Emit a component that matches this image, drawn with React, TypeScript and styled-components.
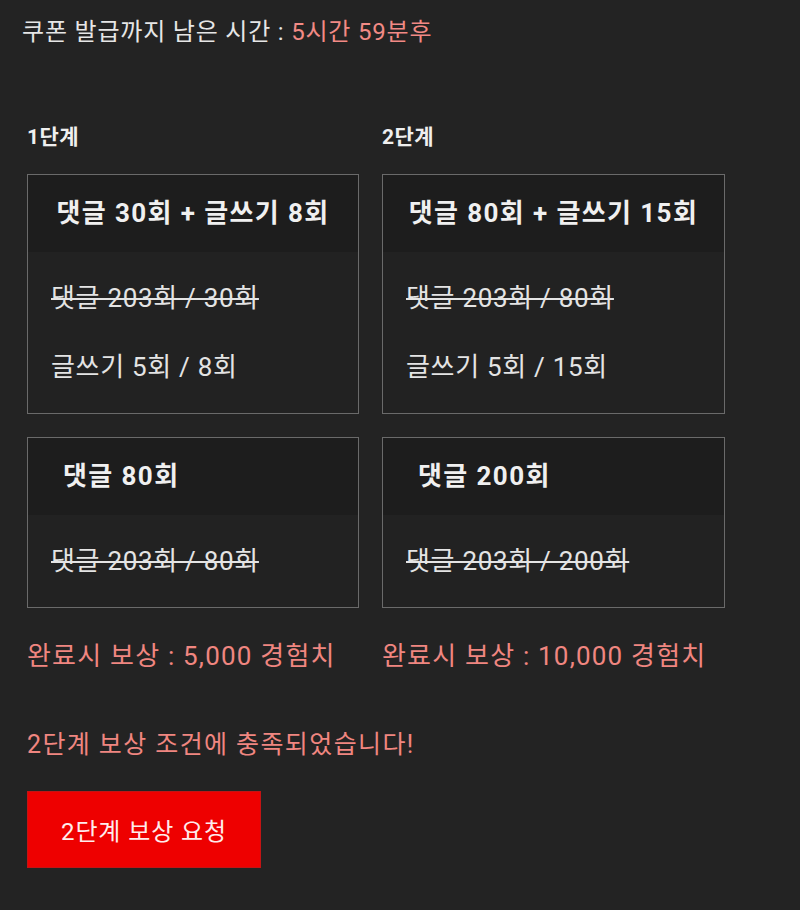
import React from 'react';
import styled, { createGlobalStyle } from 'styled-components';

const FONT = `Roboto, "Noto Sans CJK KR", "Noto Sans", sans-serif`;

const GlobalStyle = createGlobalStyle`
  html, body {
    margin: 0;
    padding: 0;
    background-color: #232323;
  }
  body {
    font-family: ${FONT};
    color: #ececec;
  }
`;

const Page = styled.div`
  width: 800px;
  min-height: 910px;
  padding: 14px 0 0 27px;
  box-sizing: border-box;
`;

const Countdown = styled.div`
  margin-left: -5px;
  font-size: 24px;
  letter-spacing: 0.8px;
  line-height: 36px;
  color: #e6e6e6;
`;

const Highlight = styled.span`
  color: #f28a85;
`;

const StageGrid = styled.div`
  display: grid;
  grid-template-columns: 332px 343px;
  column-gap: 23px;
  margin-top: 72px;
`;

const StageColumn = styled.div`
  display: flex;
  flex-direction: column;
`;

const StageLabel = styled.div`
  font-size: 21px;
  font-weight: 700;
  letter-spacing: 0.5px;
  line-height: 30px;
  margin-bottom: 22px;
  color: #efefef;
`;

const MissionCard = styled.div`
  border: 1px solid #6a6a6a;
  background-color: #222222;
  margin-bottom: 23px;
`;

const CardHeader = styled.div<{ $align: 'center' | 'left' }>`
  height: 77px;
  box-sizing: border-box;
  padding-bottom: 6px;
  display: flex;
  align-items: center;
  justify-content: ${(p) => (p.$align === 'center' ? 'center' : 'flex-start')};
  padding-left: ${(p) => (p.$align === 'center' ? 0 : 35)}px;
  background-color: #1d1d1d;
  font-size: 26px;
  font-weight: 700;
  letter-spacing: 1.4px;
  color: #f0f0f0;
`;

const CardBody = styled.div`
  padding: 12px 0 11px 23px;
`;

const ProgressRow = styled.div<{ $done?: boolean }>`
  font-size: 26px;
  letter-spacing: 0.7px;
  line-height: 69px;
  color: #e4e4e4;
  text-decoration: ${(p) => (p.$done ? 'line-through' : 'none')};
  text-decoration-thickness: 2px;
`;

const Reward = styled.div`
  margin-top: 5px;
  font-size: 26px;
  letter-spacing: 1.2px;
  line-height: 40px;
  color: #f08680;
`;

const Notice = styled.div`
  margin-top: 49px;
  font-size: 25px;
  letter-spacing: 1.4px;
  line-height: 40px;
  color: #f08680;
`;

const ClaimButton = styled.button`
  margin-top: 26px;
  width: 234px;
  height: 77px;
  border: 1px solid #c41414;
  background-color: #ee0000;
  color: #ffecec;
  font-family: ${FONT};
  font-size: 24px;
  letter-spacing: 0.9px;
  cursor: pointer;
`;

interface Mission {
  title: string;
  align: 'center' | 'left';
  rows: { text: string; done?: boolean }[];
}

interface Stage {
  label: string;
  reward: string;
  missions: Mission[];
}

const stages: Stage[] = [
  {
    label: '1단계',
    reward: '완료시 보상 : 5,000 경험치',
    missions: [
      {
        title: '댓글 30회 + 글쓰기 8회',
        align: 'center',
        rows: [{ text: '댓글 203회 / 30회', done: true }, { text: '글쓰기 5회 / 8회' }],
      },
      {
        title: '댓글 80회',
        align: 'left',
        rows: [{ text: '댓글 203회 / 80회', done: true }],
      },
    ],
  },
  {
    label: '2단계',
    reward: '완료시 보상 : 10,000 경험치',
    missions: [
      {
        title: '댓글 80회 + 글쓰기 15회',
        align: 'center',
        rows: [{ text: '댓글 203회 / 80회', done: true }, { text: '글쓰기 5회 / 15회' }],
      },
      {
        title: '댓글 200회',
        align: 'left',
        rows: [{ text: '댓글 203회 / 200회', done: true }],
      },
    ],
  },
];

const App: React.FC = () => {
  return (
    <>
      <GlobalStyle />
      <Page>
        <Countdown>
          쿠폰 발급까지 남은 시간 : <Highlight>5시간 59분후</Highlight>
        </Countdown>
        <StageGrid>
          {stages.map((stage) => (
            <StageColumn key={stage.label}>
              <StageLabel>{stage.label}</StageLabel>
              {stage.missions.map((m) => (
                <MissionCard key={m.title}>
                  <CardHeader $align={m.align}>{m.title}</CardHeader>
                  <CardBody>
                    {m.rows.map((r) => (
                      <ProgressRow key={r.text} $done={r.done}>
                        {r.text}
                      </ProgressRow>
                    ))}
                  </CardBody>
                </MissionCard>
              ))}
              <Reward>{stage.reward}</Reward>
            </StageColumn>
          ))}
        </StageGrid>
        <Notice>2단계 보상 조건에 충족되었습니다!</Notice>
        <ClaimButton>2단계 보상 요청</ClaimButton>
      </Page>
    </>
  );
};

export default App;
